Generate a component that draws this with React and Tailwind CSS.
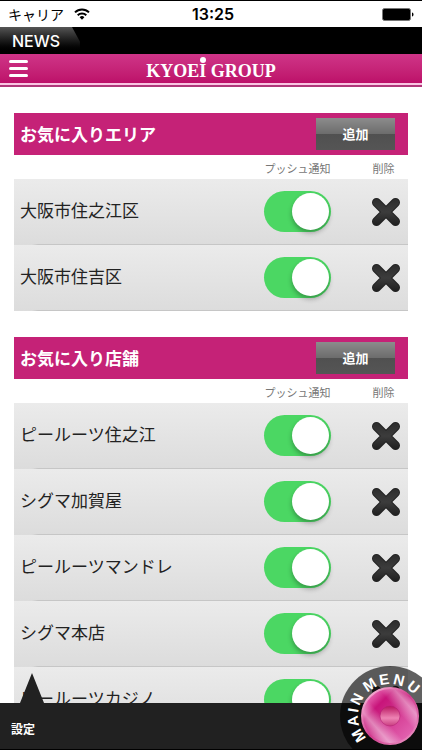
import { useId, useState } from "react";

const AREAS = ["大阪市住之江区", "大阪市住吉区"];

const SHOPS = [
  "ピールーツ住之江",
  "シグマ加賀屋",
  "ピールーツマンドレ",
  "シグマ本店",
  "ピールーツカジノ",
];

// letters of the dial, clockwise angle from the top
const DIAL_LETTERS = [
  ["M", -122],
  ["A", -98],
  ["I", -81],
  ["N", -63],
  ["M", -33],
  ["E", -9],
  ["N", 14],
  ["U", 39],
];

const StatusBar = () => (
  <div className="grid h-[27px] grid-cols-[1fr_auto_1fr] items-center border-t border-black bg-white px-2 text-black">
    <div className="flex items-center gap-2.5 text-sm">
      <span>キャリア</span>
      <svg viewBox="0 0 16 12" className="h-3 w-4" fill="none" stroke="currentColor" strokeWidth="2">
        <path d="M1 4.4a10 10 0 0 1 14 0" />
        <path d="M3.700 7.200a6.200 6.200 0 0 1 8.600 0" />
        <path d="M8 11.800 5.600 9.200a3.400 3.400 0 0 1 4.800 0Z" fill="currentColor" stroke="none" />
      </svg>
    </div>
    <span className="pl-1 font-[Inter,sans-serif] text-base font-semibold">13:25</span>
    <svg viewBox="0 0 32 13" className="h-[13px] w-8 justify-self-end">
      <rect x="0.5" y="0.5" width="28" height="12" rx="2" fill="#000" stroke="#777" />
      <path d="M30 4.5c2 .5 2 3.500 0 4Z" fill="#000" />
    </svg>
  </div>
);

const NewsBar = () => (
  <div className="h-[27px] bg-black">
    <a
      href="#news"
      className="flex h-full w-20 items-center bg-linear-to-b from-[#555] to-black pl-3 font-[Inter,sans-serif] text-base font-medium text-white [clip-path:polygon(0_0,90%_0,100%_55%,100%_100%,0_100%)]"
    >
      NEWS
    </a>
  </div>
);

const Header = () => (
  <header className="border-b-2 border-[#b0377a] bg-[#f9c5e2] pb-0.5">
    <div className="grid h-[29px] grid-cols-[40px_1fr_40px] items-center bg-linear-to-b from-[#cf3488] to-[#bd0f69]">
      <button type="button" aria-label="メニュー" className="flex flex-col gap-1 pl-[9px]">
        <span className="h-[3px] w-[19px] rounded-full bg-white" />
        <span className="h-[3px] w-[19px] rounded-full bg-white" />
        <span className="h-[3px] w-[19px] rounded-full bg-white" />
      </button>
      <h1 className="pt-1 text-center font-['Liberation_Serif',serif] text-lg leading-none font-bold text-white">
        KYOE
        <span className="relative">
          I
          <span className="absolute -top-1 left-1/2 size-1.5 -translate-x-1/2 rounded-full bg-white" />
        </span>{" "}
        GROUP
      </h1>
    </div>
  </header>
);

const CrossIcon = () => {
  const id = useId();

  return (
    <svg viewBox="0 0 30 30" className="size-[30px]">
      <defs>
        <linearGradient id={id} gradientUnits="userSpaceOnUse" x1="0" y1="0" x2="0" y2="30">
          <stop offset="0" stopColor="#2a2a2a" />
          <stop offset="0.5" stopColor="#3c3c3c" />
          <stop offset="1" stopColor="#1c1c1c" />
        </linearGradient>
      </defs>
      <path d="M5.500 5.500 24.500 24.500M24.500 5.500 5.500 24.500" stroke="#222" strokeWidth="9" strokeLinecap="round" />
      <path d="M5.500 5.500 24.500 24.500M24.500 5.500 5.500 24.500" stroke={`url(#${id})`} strokeWidth="7" strokeLinecap="round" />
    </svg>
  );
};

const FavoriteRow = ({ name, onDelete }) => {
  const [push, setPush] = useState(true);

  return (
    <tr className="h-[66px] bg-[linear-gradient(90deg,transparent_18px,#c6c6c6_24px),linear-gradient(#ebebeb,#dcdcdc)] bg-[length:100%_1px,100%_100%] bg-bottom bg-no-repeat">
      <th scope="row" className="pb-1 pl-1.5 text-left text-[17px] font-normal whitespace-nowrap text-[#222]">
        {name}
      </th>
      <td className="pb-0.5">
        <label className="relative mx-auto block h-[41px] w-[67px]">
          <input
            type="checkbox"
            role="switch"
            checked={push}
            onChange={(e) => setPush(e.target.checked)}
            aria-label={`${name} プッシュ通知`}
            className="peer block size-full appearance-none rounded-full bg-[#ccc] checked:bg-[#4bd763]"
          />
          <span className="pointer-events-none absolute top-0.5 left-0.5 size-[37px] rounded-full bg-white shadow-[0_3px_5px_rgba(0,0,0,0.3)] peer-checked:left-7" />
        </label>
      </td>
      <td>
        <button
          type="button"
          aria-label={`${name} 削除`}
          onClick={onDelete}
          className="mx-auto block"
        >
          <CrossIcon />
        </button>
      </td>
    </tr>
  );
};

const FavoriteSection = ({ title, initialItems }) => {
  const [items, setItems] = useState(initialItems);

  const handleDelete = (name) => {
    setItems((prev) => prev.filter((item) => item !== name));
  };

  return (
    <section>
      <div className="flex h-[42px] items-center justify-between bg-[#c52277] pr-[13px] pl-1.5">
        <h2 className="text-[17px] font-bold text-white">{title}</h2>
        <button
          type="button"
          className="h-8 w-[79px] bg-[linear-gradient(#8c8c8c,#6c6c6c_50%,#505050_50%,#555)] text-[13px] font-bold text-white"
        >
          追加
        </button>
      </div>
      <table className="w-full table-fixed border-collapse">
        <colgroup>
          <col />
          <col className="w-[131px]" />
          <col className="w-[45px]" />
        </colgroup>
        <thead>
          <tr className="h-6 text-[11px] text-[#777]">
            <td />
            <th scope="col" className="pt-0.5 font-normal whitespace-nowrap">
              プッシュ通知
            </th>
            <th scope="col" className="pt-0.5 pr-1 font-normal whitespace-nowrap">
              削除
            </th>
          </tr>
        </thead>
        <tbody>
          {items.map((name) => (
            <FavoriteRow key={name} name={name} onDelete={() => handleDelete(name)} />
          ))}
        </tbody>
      </table>
    </section>
  );
};

const MainMenuButton = () => (
  <button
    type="button"
    aria-label="MAIN MENU"
    className="absolute -right-[18px] -bottom-[17px] size-[100px]"
  >
    <svg viewBox="0 0 100 100" className="size-full">
      <defs>
        <linearGradient id="dial" x1="0.1" y1="0.1" x2="0.9" y2="0.9">
          <stop offset="0" stopColor="#f07cc0" />
          <stop offset="0.25" stopColor="#c8147a" />
          <stop offset="0.45" stopColor="#cc2a86" />
          <stop offset="0.65" stopColor="#d8459a" />
          <stop offset="1" stopColor="#e468b4" />
        </linearGradient>
        <linearGradient id="shine" x1="0.1" y1="0.85" x2="0.9" y2="0.15">
          <stop offset="0" stopColor="#fff" stopOpacity="0" />
          <stop offset="0.2" stopColor="#fff" stopOpacity="0.45" />
          <stop offset="0.4" stopColor="#fff" stopOpacity="0" />
          <stop offset="0.65" stopColor="#fff" stopOpacity="0" />
          <stop offset="0.85" stopColor="#fff" stopOpacity="0.4" />
          <stop offset="1" stopColor="#fff" stopOpacity="0" />
        </linearGradient>
        <linearGradient id="rim" x1="0" y1="0" x2="1" y2="1">
          <stop offset="0" stopColor="#ffd0e8" />
          <stop offset="0.5" stopColor="#d03a8c" />
          <stop offset="1" stopColor="#f0a0cc" />
        </linearGradient>
        <linearGradient id="hub" x1="0" y1="0" x2="0" y2="1">
          <stop offset="0" stopColor="#b8145f" />
          <stop offset="0.6" stopColor="#ee84b4" />
          <stop offset="1" stopColor="#c83c80" />
        </linearGradient>
      </defs>
      <circle cx="50" cy="50" r="50" fill="#000" fillOpacity="0.62" />
      <g className="font-['Liberation_Sans',sans-serif] text-[15px] font-bold" fill="#fff" textAnchor="middle">
        {DIAL_LETTERS.map(([letter, angle]) => (
          <text key={angle} x="50" y="18" transform={`rotate(${angle} 50 50)`}>
            {letter}
          </text>
        ))}
      </g>
      <circle cx="50" cy="50" r="28" fill="url(#dial)" />
      <circle cx="50" cy="50" r="28" fill="url(#shine)" stroke="url(#rim)" strokeWidth="2" />
      <circle cx="50" cy="50" r="10" fill="url(#hub)" stroke="#b02070" strokeWidth="0.5" />
    </svg>
  </button>
);

const App = () => (
  <div className="flex h-screen flex-col overflow-hidden bg-white font-['Noto_Sans_CJK_JP',sans-serif]">
    <StatusBar />
    <NewsBar />
    <Header />

    <main className="flex min-h-0 flex-1 flex-col gap-[26px] overflow-y-auto px-3.5 pt-[26px] [scrollbar-width:none]">
      <FavoriteSection title="お気に入りエリア" initialItems={AREAS} />
      <FavoriteSection title="お気に入り店舗" initialItems={SHOPS} />
    </main>

    <footer className="relative h-[47px] shrink-0 border-b border-black bg-[#212121]">
      <svg viewBox="0 0 24 30" className="absolute bottom-full left-5 h-[30px] w-6">
        <path d="M12 0 24 30H0Z" fill="#212121" />
      </svg>
      <a href="#settings" className="flex h-full w-fit items-center px-[11px] pt-1.5 text-xs font-bold text-white">
        設定
      </a>
      <MainMenuButton />
    </footer>
  </div>
);

export default App;
